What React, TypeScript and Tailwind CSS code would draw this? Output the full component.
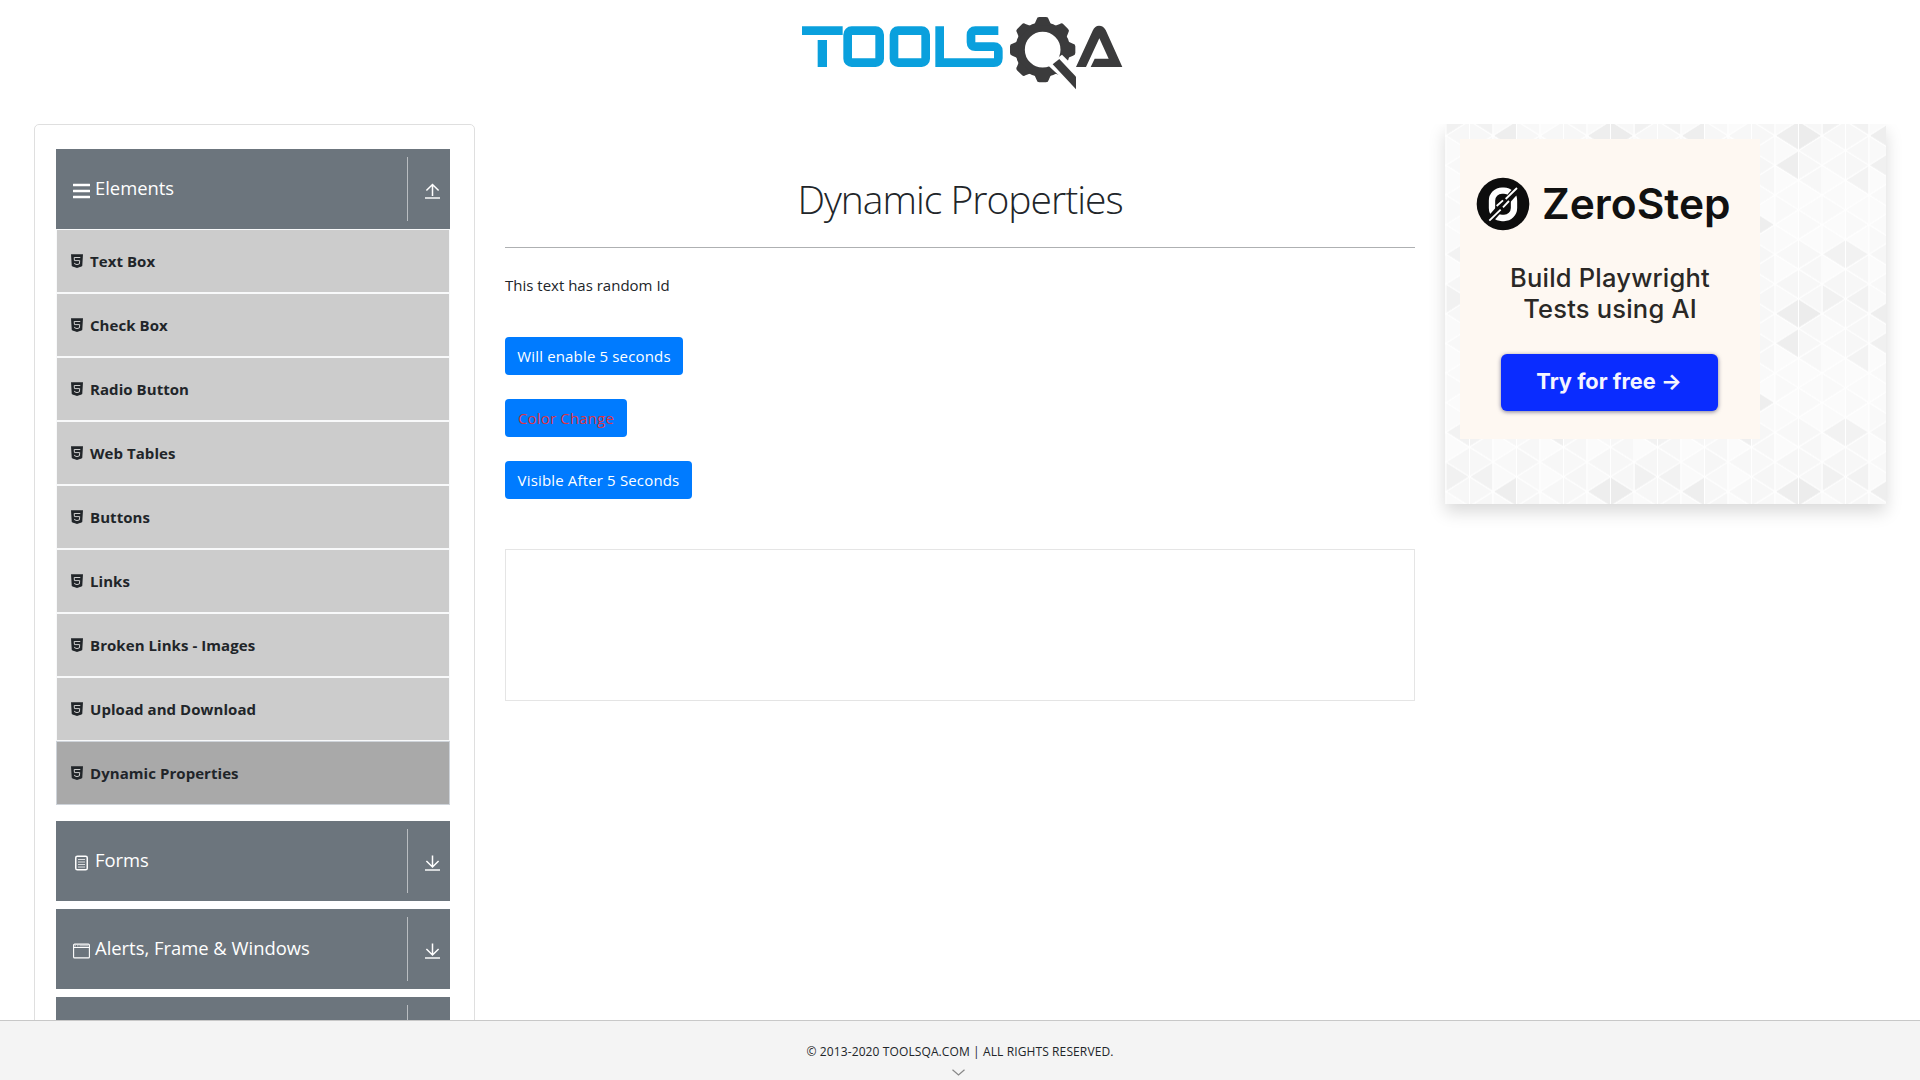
import type { ReactNode } from "react";

const BLUE = "#0aa0dd";
const DARK = "#3b3b3c";

function Logo() {
  return (
    <svg viewBox="0 0 1080 300" className="h-[100px] w-[360px]">
      <g fill="none" stroke={BLUE} strokeWidth="26">
        <path d="M66 92H188" />
        <path d="M127 120V201" strokeWidth="28" />
        <rect x="203" y="92" width="96" height="96" rx="12" />
        <rect x="342" y="92" width="95" height="96" rx="12" />
        <path d="M655 92H586q-13 0-13 13v22q0 13 13 13h56q13 0 13 13v22q0 13-13 13H479V79" />
      </g>
      <g fill={DARK}>
        <circle cx="788" cy="149" r="68" fill="none" stroke={DARK} strokeWidth="29" />
        {[0, 45, 90, 135, 180, 225, 270, 315].map((a) => (
          <path
            key={a}
            transform={`rotate(${a} 788 149)`}
            d="M762 76L770 58Q771 51 778 51H798Q805 51 806 58L814 76Z"
          />
        ))}
      </g>
      <path d="M803 195L846 164L905 222V290Z" fill="#fff" />
      <path d="M818 193L838 177L888 230V268Z" fill={DARK} />
      <path
        d="M888 201L938 92Q945 77 957 77Q970 77 977 90L1027 201H932L944 176H986L958 115L918 201Z"
        fill={DARK}
      />
    </svg>
  );
}

function MenuIcon() {
  return (
    <svg viewBox="0 0 17 16" className="h-4 w-[17px]" fill="#fff">
      <rect y="0.7" width="17" height="2.6" rx="0.4" />
      <rect y="6.7" width="17" height="2.6" rx="0.4" />
      <rect y="12.7" width="17" height="2.6" rx="0.4" />
    </svg>
  );
}

function FormIcon() {
  return (
    <svg viewBox="0 0 17 16" className="h-4 w-[17px]" fill="none" stroke="#fff">
      <rect x="2.75" y="1.2" width="11.5" height="13.6" rx="1.6" strokeWidth="1.5" />
      <path d="M5 4.5h7M5 7h7M5 9.5h7M5 12h7" strokeWidth="1" opacity="0.75" />
    </svg>
  );
}

function WindowIcon() {
  return (
    <svg viewBox="0 0 17 16" className="h-4 w-[17px]" fill="none" stroke="#fff">
      <rect x="0.6" y="1.1" width="15.8" height="13.8" rx="1" strokeWidth="1.1" />
      <path d="M1 4.5h15" strokeWidth="1" />
      <path d="M1.500 2.800h1.500M4 2.800h1.500M6.500 2.800h9" strokeWidth="1.600" opacity="0.5" />
    </svg>
  );
}

function ArrowIcon({ up }: { up?: boolean }) {
  return (
    <svg viewBox="0 0 15 16" className="h-4 w-[15px]" fill="none" stroke="#fff">
      {up ? (
        <path d="M7.500 13V1.500M1.400 7.500L7.500 1.500L13.600 7.500" strokeWidth="1.500" />
      ) : (
        <path d="M7.500 0.500V12M1.400 6L7.500 12L13.600 6" strokeWidth="1.500" />
      )}
      <path d="M0 15H15" strokeWidth="1.700" opacity="0.85" />
    </svg>
  );
}

function ShieldIcon() {
  return (
    <svg viewBox="0 0 12 14" className="h-[14px] w-3 shrink-0">
      <path d="M0 0.300H12L11.300 11.500Q11.200 12.300 10.400 12.600L6 13.900L1.600 12.600Q0.800 12.300 0.700 11.500Z" fill="#212529" />
      <path d="M9.300 3.500H3.200L3.450 6.600H8.700L8.400 9.900L6 10.600L3.700 9.900L3.600 8.900" fill="none" stroke="#ccc" strokeWidth="1" />
    </svg>
  );
}

function GroupHeader({ icon, title, open }: { icon?: ReactNode; title?: string; open?: boolean }) {
  return (
    <div className="flex h-20 shrink-0 items-center bg-[#6c757d] pl-[17px] text-white">
      <div className="pt-[3px]">{icon}</div>
      <span className="ml-[5px] flex-1 pb-[2px] text-[18.4px] leading-7 whitespace-nowrap">{title}</span>
      <div className="flex h-16 w-[43px] items-center justify-center border-l border-[#b9bdc1] pt-[3px] pl-[7px]">
        <ArrowIcon up={open} />
      </div>
    </div>
  );
}

const ITEMS = [
  "Text Box",
  "Check Box",
  "Radio Button",
  "Web Tables",
  "Buttons",
  "Links",
  "Broken Links - Images",
  "Upload and Download",
];

function Sidebar() {
  return (
    <aside className="h-[1100px] w-[441px] shrink-0 rounded-[5px] border border-[#dfdfdf] pt-6 pr-6 pl-[21px]">
      <GroupHeader icon={<MenuIcon />} title="Elements" open />
      <ul className="text-[15px] font-bold tracking-[0.06px] text-[#212529]">
        {ITEMS.map((t) => (
          <li key={t} className="flex h-16 items-center gap-[7px] border border-[#f8f9fa] bg-[#ccc] pl-[14px]">
            <ShieldIcon />
            {t}
          </li>
        ))}
        <li className="flex h-16 items-center gap-[7px] border border-[#ced3d9] bg-[#a9a9a9] pl-[14px]">
          <ShieldIcon />
          Dynamic Properties
        </li>
      </ul>
      <div className="mt-4 flex flex-col gap-2">
        <GroupHeader icon={<FormIcon />} title="Forms" />
        <GroupHeader icon={<WindowIcon />} title="Alerts, Frame & Windows" />
        <GroupHeader />
      </div>
    </aside>
  );
}

function Content() {
  return (
    <main className="flex flex-1 flex-col items-start text-[15px] text-[#212529]">
      <h1 className="mt-[51px] h-12 w-full text-center text-[39px] leading-[48px] font-light tracking-[-1px]">
        Dynamic Properties
      </h1>
      <div className="mt-6 w-full border-t border-[#aeb0b2]" />
      <p className="mt-[25px] h-6 leading-6">This text has random Id</p>
      <div className="mt-10 flex flex-col items-start gap-6 tracking-[0.16px] text-white">
        <button className="h-[38px] w-[178px] rounded bg-[#007bff]">Will enable 5 seconds</button>
        <button className="h-[38px] w-[122px] rounded bg-[#007bff] text-[#dc3545]">Color Change</button>
        <button className="h-[38px] w-[187px] rounded bg-[#007bff]">Visible After 5 Seconds</button>
      </div>
      <div className="mt-[50px] h-[152px] w-full border border-[#e5e5e5]" />
    </main>
  );
}

const COL = 23.5;
const STEP = 14.83;
const SHADES = ["#fafafa", "#f7f7f7", "#f9f9f9", "#f6f6f6", "#fbfbfb", "#f8f8f8"];
const ACCENTS: Record<string, string> = {
  "6:11": "#eeeeee",
  "7:11": "#ececec",
  "6:1": "#eeeeee",
  "2:11": "#eeeeee",
  "2:1": "#f0f0f0",
  "1:2": "#f3f3f3",
  "0:7": "#f2f2f2",
  "1:7": "#f2f2f2",
  "5:5": "#eeeeee",
  "0:10": "#f1f1f1",
  "1:10": "#f2f2f2",
  "4:7": "#efefef",
};

function TrianglePattern() {
  const cells = [];
  for (let i = 0; i < 8; i++) {
    for (let j = -2; j < 12; j++) {
      const k = (j + 12) % 12;
      const pts = [j, j + 1, j + 2]
        .map((n) => `${(n + i) % 2 === 0 ? i * COL : (i + 1) * COL},${(n * STEP).toFixed(2)}`)
        .join(" ");
      const light = k > 2 && k < 7;
      const shade = ACCENTS[`${i}:${k}`] ?? (light ? SHADES[((i * 5 + k * 7) % 3) * 2] : SHADES[(i * 7 + k * 5 + i * k) % 6]);
      cells.push(<polygon key={`${i}:${j}`} points={pts} fill={shade} stroke="#fff" strokeWidth="1" />);
    }
  }
  return (
    <svg className="absolute inset-0 h-full w-full">
      <defs>
        <pattern id="tri" x="1" y="11.7" width="188" height="177.96" patternUnits="userSpaceOnUse">
          {cells}
        </pattern>
      </defs>
      <rect width="100%" height="100%" fill="url(#tri)" />
    </svg>
  );
}

function ZeroMark() {
  return (
    <svg viewBox="0 0 210 210" className="h-[70px] w-[70px]">
      <circle cx="99" cy="102" r="79" fill="#0d0d0d" />
      <rect x="66" y="62" width="66" height="82" rx="30" fill="none" stroke="#fff" strokeWidth="19" />
      <path d="M52 158L148 50" stroke="#0d0d0d" strokeWidth="22" />
      <path d="M58 152L92 119M80 108L99 91M99 112L117 93M107 87L141 54" stroke="#fff" strokeWidth="5.5" />
    </svg>
  );
}

function Ad() {
  return (
    <aside className="relative h-[380px] w-[441px] shrink-0 bg-[#f9f9f9] p-[15px] shadow-[0_8px_16px_rgba(0,0,0,0.15)]">
      <TrianglePattern />
      <div className="relative flex h-[300px] w-[300px] flex-col bg-[#fef8f2] font-['Inter',sans-serif] text-[#111]">
        <div className="mt-[31px] ml-[10px] flex h-[70px] items-center">
          <ZeroMark />
          <span className="ml-[2px] pb-[3px] text-[42.5px] leading-[50px] font-semibold">ZeroStep</span>
        </div>
        <div className="mt-[22px] text-center text-[25.5px] leading-[31px] font-medium tracking-[0.2px] text-[#2a2826]">
          Build Playwright
          <br />
          Tests using AI
        </div>
        <div className="mt-[30px] ml-[41px] flex h-[57px] w-[217px] items-center justify-center rounded-md bg-[#0a2cff] pr-[1px] pb-[3px] text-[21.800px] font-bold text-[#f4f4ff] shadow-[0_1px_4px_rgba(0,0,60,0.5)]">
          Try for free →
        </div>
      </div>
    </aside>
  );
}

export default function App() {
  return (
    <div className="flex h-[1080px] w-full flex-col overflow-hidden bg-white font-['Open_Sans','Noto_Sans',sans-serif]">
      <header className="flex h-[124px] shrink-0 justify-center">
        <Logo />
      </header>
      <div className="flex min-h-0 flex-1 items-start gap-[30px] overflow-hidden px-[34px]">
        <Sidebar />
        <Content />
        <Ad />
      </div>
      <footer className="flex h-[60px] shrink-0 flex-col items-center border-t border-[#c8c8c8] bg-[#f4f4f4] pt-[22px]">
        <span className="text-[12px] leading-[18px] tracking-[0.11px] text-[#212529]">
          © 2013-2020 TOOLSQA.COM | ALL RIGHTS RESERVED.
        </span>
        <svg viewBox="0 0 13 7" className="mt-[8px] mr-[3px] h-[7px] w-[13px]" fill="none" stroke="#888" strokeWidth="1.200">
          <path d="M0.500 0.700L6.500 6L12.500 0.700" />
        </svg>
      </footer>
    </div>
  );
}
